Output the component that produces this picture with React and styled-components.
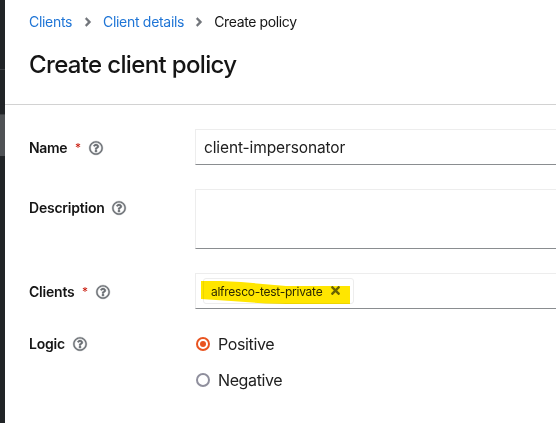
import React from "react";
import styled, { createGlobalStyle } from "styled-components";
import { FaAngleRight, FaRegQuestionCircle, FaTimes } from "react-icons/fa";

const GlobalStyle = createGlobalStyle`
  * { box-sizing: border-box; }
  html, body { margin: 0; overflow: hidden; background: #fff; }
  body { font-family: Inter, "Open Sans", sans-serif; color: #151515; }
`;

const Page = styled.div`
  display: flex;
  width: 556px;
  height: 423px;
  overflow: hidden;
`;

const Sidebar = styled.aside`
  flex: 0 0 5px;
  display: flex;
  flex-direction: column;
  background: #212427;
`;

const NavItem = styled.div`
  flex: 0 0 ${(p) => p.$height}px;
  border-bottom: 1px solid ${(p) => (p.$current ? "#4f5255" : "#3c3f42")};
  background: ${(p) => (p.$current ? "#4f5255" : "transparent")};
`;

const Main = styled.main`
  flex: 1;
  min-width: 0;
`;

const Header = styled.header`
  height: 105px;
  padding: 11px 0 0 24px;
  border-bottom: 1px solid #d2d2d2;
`;

const Breadcrumb = styled.nav`
  display: flex;
  align-items: center;
  height: 21px;
  font-size: 14px;
  line-height: 21px;
  white-space: nowrap;
`;

const Crumb = styled.span`
  flex: 0 0 ${(p) => p.$width}px;
  letter-spacing: ${(p) => p.$tracking}px;
  color: ${(p) => (p.$current ? "#151515" : "#1f75d6")};
`;

const Separator = styled(FaAngleRight)`
  flex: 0 0 auto;
  width: 14px;
  height: 14px;
  margin: 1px 8px 0;
  color: #72767b;
  stroke: #72767b;
  stroke-width: 8px;
`;

const Title = styled.h1`
  margin: 17px 0 0;
  font-size: 24px;
  font-weight: 500;
  line-height: 31px;
  letter-spacing: -0.65px;
  white-space: nowrap;
`;

const Form = styled.form`
  display: grid;
  grid-template-columns: 166px 1fr;
  row-gap: 24px;
  padding: 24px 0 0 24px;
`;

const Label = styled.div`
  display: flex;
  align-items: center;
  height: 36px;
  margin-top: ${(p) => p.$lift || 0}px;
  padding-top: 1px;
  font-size: 14px;
  font-weight: 600;
  letter-spacing: ${(p) => p.$tracking}px;
  white-space: nowrap;
`;

const LabelText = styled.span`
  width: ${(p) => p.$width}px;
`;

const Required = styled.span`
  width: 6px;
  margin-left: 8px;
  font-size: 12px;
  font-weight: 400;
  color: #c9190b;
`;

const Help = styled(FaRegQuestionCircle)`
  width: 14px;
  height: 14px;
  margin-left: 8px;
  overflow: visible;
  color: #6a6e73;
  stroke: #6a6e73;
  stroke-width: 14px;
`;

const Field = styled.div`
  display: flex;
  align-items: center;
  height: ${(p) => p.$height || 36}px;
  padding-left: ${(p) => p.$inset || 0}px;
  border: 1px solid #ededed;
  border-right: 0;
  border-bottom-color: #8a8d90;
`;

const Value = styled.span`
  font-size: 15.5px;
  letter-spacing: -0.12px;
  white-space: nowrap;
  color: #202020;
`;

const Chip = styled.div`
  position: relative;
  display: flex;
  align-items: center;
  width: 151px;
  height: 26px;
  margin-top: -1px;
  padding-left: 7px;
  border: 1px solid #ededed;
  border-radius: 3px;
  font-size: 12px;
  letter-spacing: -0.26px;
  white-space: nowrap;
`;

const ChipText = styled.span`
  flex: 0 0 118px;
  padding-top: 1px;
  color: #2c2c2c;
`;

const Remove = styled(FaTimes)`
  width: 13px;
  height: 13px;
  color: #6a6e73;
`;

const Highlight = styled.svg`
  position: absolute;
  left: -3px;
  top: 1px;
  width: 150px;
  height: 25px;
  mix-blend-mode: multiply;
`;

const Options = styled.div`
  display: flex;
  flex-direction: column;
  margin-top: -7px;
`;

const Option = styled.label`
  display: flex;
  align-items: center;
  gap: 8px;
  height: 36px;
  padding-left: 1px;
  font-size: 16px;
  letter-spacing: ${(p) => p.$tracking}px;
  color: #202020;
`;

const Radio = styled.span`
  display: flex;
  align-items: center;
  justify-content: center;
  width: 14px;
  height: 14px;
  border: 2px solid ${(p) => (p.$checked ? "#e95420" : "#8f8f9d")};
  border-radius: 50%;

  &::after {
    content: "";
    width: 6px;
    height: 6px;
    border-radius: 50%;
    background: ${(p) => (p.$checked ? "#e95420" : "transparent")};
  }
`;

function FieldLabel({ text, width, tracking, required, lift }) {
  return (
    <Label $tracking={tracking} $lift={lift}>
      <LabelText $width={width}>{text}</LabelText>
      {required && <Required>*</Required>}
      <Help />
    </Label>
  );
}

export default function App() {
  return (
    <Page>
      <GlobalStyle />
      <Sidebar>
        <NavItem $height={70} />
        <NavItem $height={45} />
        <NavItem $height={41} $current />
      </Sidebar>
      <Main>
        <Header>
          <Breadcrumb>
            <Crumb $width={44} $tracking={-0.3}>Clients</Crumb>
            <Separator />
            <Crumb $width={81} $tracking={-0.3}>Client details</Crumb>
            <Separator />
            <Crumb $width={83} $tracking={-0.37} $current>Create policy</Crumb>
          </Breadcrumb>
          <Title>Create client policy</Title>
        </Header>
        <Form>
          <FieldLabel text="Name" width={38} tracking={-0.35} required />
          <Field $inset={8}>
            <Value>client-impersonator</Value>
          </Field>
          <FieldLabel text="Description" width={75} tracking={-0.22} />
          <Field $height={60} />
          <FieldLabel text="Clients" width={45} tracking={-0.22} required />
          <Field $inset={7}>
            <Chip>
              <ChipText>alfresco-test-private</ChipText>
              <Remove />
              <Highlight viewBox="0 0 150 25">
                <path d="M0 1 L20 1 L40 2 L85 6 L149 6 L149 24 L85 24 L65 23.5 L30 21 L0 19Z" fill="#ffe600" />
              </Highlight>
            </Chip>
          </Field>
          <FieldLabel text="Logic" width={36} tracking={-0.2} lift={-8} />
          <Options>
            <Option $tracking={-0.38}><Radio $checked />Positive</Option>
            <Option $tracking={-0.38}><Radio />Negative</Option>
          </Options>
        </Form>
      </Main>
    </Page>
  );
}
